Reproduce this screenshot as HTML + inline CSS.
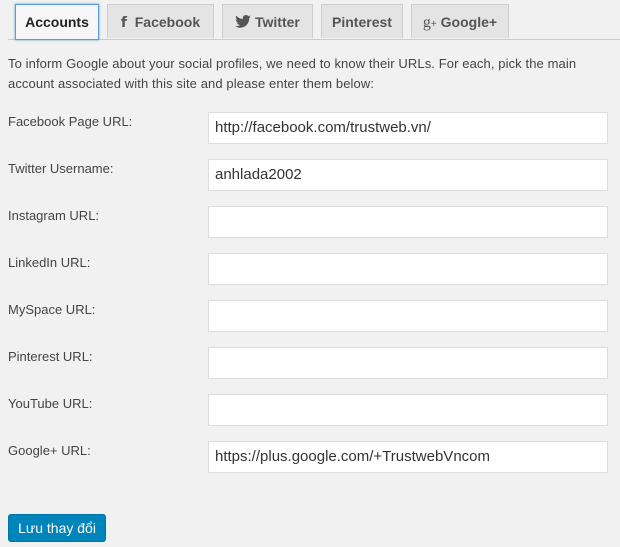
<!DOCTYPE html><html><head><style>
body{margin:0;background:#f1f1f1;font-family:"Liberation Sans",sans-serif;color:#444;width:620px;height:547px;overflow:hidden;position:relative}
.tabs{position:absolute;left:8px;right:0;top:39px;border-top:1px solid #ccc}
.tab{position:absolute;top:4px;height:34px;background:#e4e4e4;border:1px solid #ccc;border-bottom:none;box-sizing:border-box;font-weight:bold;font-size:14px;color:#555;line-height:34px;text-align:center}
.tab.a{background:#f6f6f6;color:#222;border:1px solid #5b9dd9;box-shadow:0 0 2px rgba(30,140,190,.8);height:36px}
p{position:absolute;left:8px;top:54px;margin:0;font-size:13px;line-height:20px;width:592px;color:#444;letter-spacing:0.1px}
.l{position:absolute;left:8px;font-size:13px;color:#444}
.i{position:absolute;left:208px;width:400px;height:32px;background:#fff;border:1px solid #ddd;box-sizing:border-box;font-size:15px;line-height:30px;padding-left:6px;color:#333}
.b{position:absolute;left:8px;top:514px;width:98px;height:28px;background:#0085ba;border:1px solid #0073aa;box-sizing:border-box;border-radius:3px;color:#fff;font-size:14px;line-height:26px;text-align:center}
</style></head><body>
<div class="tabs"></div>
<div class="tab a" style="left:15px;width:84px">Accounts</div>
<div class="tab" style="left:107px;width:107px"><span style="font-family:'DejaVu Sans';">f</span>&nbsp; Facebook</div>
<div class="tab" style="left:222px;width:91px"><svg width="16" height="13" viewBox="0 0 24 20" style="vertical-align:-1px"><path fill="#555" d="M24 2.4c-.9.4-1.8.7-2.8.8 1-.6 1.8-1.6 2.2-2.7-1 .6-2 1-3.1 1.2C19.3.7 18 0 16.6 0c-2.7 0-4.9 2.2-4.9 4.9 0 .4 0 .8.1 1.1C7.7 5.8 4.1 3.9 1.7.9c-.4.7-.7 1.6-.7 2.5 0 1.7.9 3.2 2.2 4.1-.8 0-1.6-.2-2.2-.6v.1c0 2.4 1.7 4.4 3.9 4.8-.4.1-.8.2-1.3.2-.3 0-.6 0-.9-.1.6 2 2.4 3.4 4.6 3.4-1.7 1.3-3.8 2.1-6.1 2.1-.4 0-.8 0-1.2-.1C2.2 18.8 4.8 19.6 7.5 19.6c9.1 0 14-7.5 14-14v-.6c1-.7 1.8-1.6 2.5-2.6z"/></svg> Twitter</div>
<div class="tab" style="left:321px;width:82px">Pinterest</div>
<div class="tab" style="left:411px;width:98px"><span style="font-family:'Liberation Serif';font-weight:normal;font-size:16px">g</span><span style="font-size:10px;font-weight:normal">+</span> Google+</div>
<p>To inform Google about your social profiles, we need to know their URLs. For each, pick the main account associated with this site and please enter them below:</p>
<div class="l" style="top:114px">Facebook Page URL:</div><div class="i" style="top:112px">http://facebook.com/trustweb.vn/</div>
<div class="l" style="top:161px">Twitter Username:</div><div class="i" style="top:159px">anhlada2002</div>
<div class="l" style="top:208px">Instagram URL:</div><div class="i" style="top:206px"></div>
<div class="l" style="top:255px">LinkedIn URL:</div><div class="i" style="top:253px"></div>
<div class="l" style="top:302px">MySpace URL:</div><div class="i" style="top:300px"></div>
<div class="l" style="top:349px">Pinterest URL:</div><div class="i" style="top:347px"></div>
<div class="l" style="top:396px">YouTube URL:</div><div class="i" style="top:394px"></div>
<div class="l" style="top:443px">Google+ URL:</div><div class="i" style="top:441px">https://plus.google.com/+TrustwebVncom</div>
<div class="b">Lưu thay đổi</div>
</body></html>
